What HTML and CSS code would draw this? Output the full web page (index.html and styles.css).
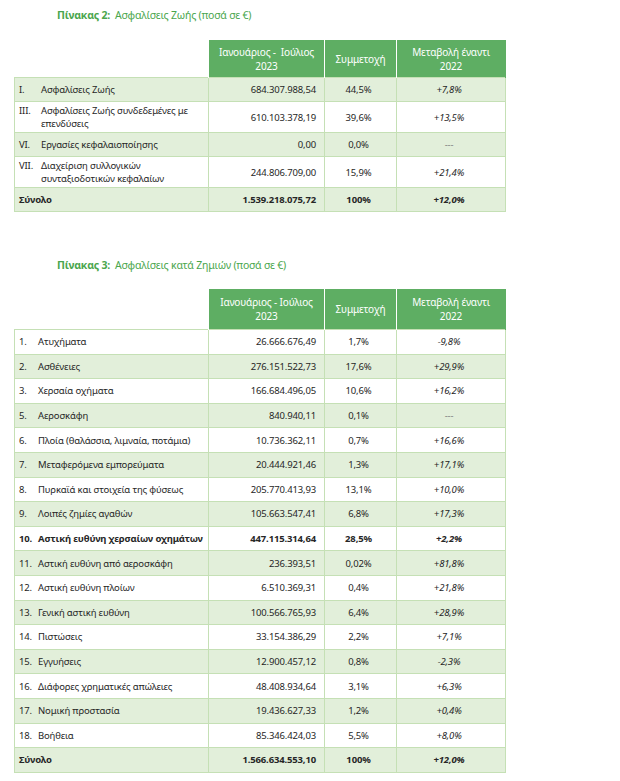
FILE: index.html
```html
<!DOCTYPE html>
<html lang="el">
<head>
<meta charset="utf-8">
<title>Πίνακες</title>
<link rel="stylesheet" href="styles.css">
</head>
<body>
<div class="page">
  <h2 class="caption caption-first"><b>Πίνακας 2:</b>&nbsp; Ασφαλίσεις Ζωής (ποσά σε €)</h2>
  <table class="data life">
    <colgroup><col class="c1"><col class="c2"><col class="c3"><col class="c4"></colgroup>
    <thead>
      <tr><th class="blank"></th><th>Ιανουάριος -&nbsp; Ιούλιος<br>2023</th><th>Συμμετοχή</th><th>Μεταβολή έναντι<br>2022</th></tr>
    </thead>
    <tbody>
      <tr class="g"><td><div class="item"><span class="num">I.</span><span>Ασφαλίσεις Ζωής</span></div></td><td class="amt">684.307.988,54</td><td class="pct">44,5%</td><td class="chg">+7,8%</td></tr>
      <tr><td><div class="item"><span class="num">III.</span><span>Ασφαλίσεις Ζωής συνδεδεμένες με επενδύσεις</span></div></td><td class="amt">610.103.378,19</td><td class="pct">39,6%</td><td class="chg">+13,5%</td></tr>
      <tr class="g"><td><div class="item"><span class="num">VI.</span><span>Εργασίες κεφαλαιοποίησης</span></div></td><td class="amt">0,00</td><td class="pct">0,0%</td><td class="chg dash">---</td></tr>
      <tr><td><div class="item"><span class="num">VII.</span><span>Διαχείριση συλλογικών συνταξιοδοτικών κεφαλαίων</span></div></td><td class="amt">244.806.709,00</td><td class="pct">15,9%</td><td class="chg">+21,4%</td></tr>
      <tr class="g total"><td>Σύνολο</td><td class="amt">1.539.218.075,72</td><td class="pct">100%</td><td class="chg">+12,0%</td></tr>
    </tbody>
  </table>

  <h2 class="caption caption-second"><b>Πίνακας 3:</b>&nbsp; Ασφαλίσεις κατά Ζημιών (ποσά σε €)</h2>
  <table class="data nonlife">
    <colgroup><col class="c1"><col class="c2"><col class="c3"><col class="c4"></colgroup>
    <thead>
      <tr><th class="blank"></th><th>Ιανουάριος - Ιούλιος<br>2023</th><th>Συμμετοχή</th><th>Μεταβολή έναντι<br>2022</th></tr>
    </thead>
    <tbody>
      <tr><td><div class="item"><span class="num">1.</span><span>Ατυχήματα</span></div></td><td class="amt">26.666.676,49</td><td class="pct">1,7%</td><td class="chg">-9,8%</td></tr>
      <tr class="g"><td><div class="item"><span class="num">2.</span><span>Ασθένειες</span></div></td><td class="amt">276.151.522,73</td><td class="pct">17,6%</td><td class="chg">+29,9%</td></tr>
      <tr><td><div class="item"><span class="num">3.</span><span>Χερσαία οχήματα</span></div></td><td class="amt">166.684.496,05</td><td class="pct">10,6%</td><td class="chg">+16,2%</td></tr>
      <tr class="g"><td><div class="item"><span class="num">5.</span><span>Αεροσκάφη</span></div></td><td class="amt">840.940,11</td><td class="pct">0,1%</td><td class="chg dash">---</td></tr>
      <tr><td><div class="item"><span class="num">6.</span><span>Πλοία (θαλάσσια, λιμναία, ποτάμια)</span></div></td><td class="amt">10.736.362,11</td><td class="pct">0,7%</td><td class="chg">+16,6%</td></tr>
      <tr class="g"><td><div class="item"><span class="num">7.</span><span>Μεταφερόμενα εμπορεύματα</span></div></td><td class="amt">20.444.921,46</td><td class="pct">1,3%</td><td class="chg">+17,1%</td></tr>
      <tr><td><div class="item"><span class="num">8.</span><span>Πυρκαϊά και στοιχεία της φύσεως</span></div></td><td class="amt">205.770.413,93</td><td class="pct">13,1%</td><td class="chg">+10,0%</td></tr>
      <tr class="g"><td><div class="item"><span class="num">9.</span><span>Λοιπές ζημίες αγαθών</span></div></td><td class="amt">105.663.547,41</td><td class="pct">6,8%</td><td class="chg">+17,3%</td></tr>
      <tr class="strong"><td><div class="item"><span class="num">10.</span><span>Αστική ευθύνη χερσαίων οχημάτων</span></div></td><td class="amt">447.115.314,64</td><td class="pct">28,5%</td><td class="chg">+2,2%</td></tr>
      <tr class="g"><td><div class="item"><span class="num">11.</span><span>Αστική ευθύνη από αεροσκάφη</span></div></td><td class="amt">236.393,51</td><td class="pct">0,02%</td><td class="chg">+81,8%</td></tr>
      <tr><td><div class="item"><span class="num">12.</span><span>Αστική ευθύνη πλοίων</span></div></td><td class="amt">6.510.369,31</td><td class="pct">0,4%</td><td class="chg">+21,8%</td></tr>
      <tr class="g"><td><div class="item"><span class="num">13.</span><span>Γενική αστική ευθύνη</span></div></td><td class="amt">100.566.765,93</td><td class="pct">6,4%</td><td class="chg">+28,9%</td></tr>
      <tr><td><div class="item"><span class="num">14.</span><span>Πιστώσεις</span></div></td><td class="amt">33.154.386,29</td><td class="pct">2,2%</td><td class="chg">+7,1%</td></tr>
      <tr class="g"><td><div class="item"><span class="num">15.</span><span>Εγγυήσεις</span></div></td><td class="amt">12.900.457,12</td><td class="pct">0,8%</td><td class="chg">-2,3%</td></tr>
      <tr><td><div class="item"><span class="num">16.</span><span>Διάφορες χρηματικές απώλειες</span></div></td><td class="amt">48.408.934,64</td><td class="pct">3,1%</td><td class="chg">+6,3%</td></tr>
      <tr class="g"><td><div class="item"><span class="num">17.</span><span>Νομική προστασία</span></div></td><td class="amt">19.436.627,33</td><td class="pct">1,2%</td><td class="chg">+0,4%</td></tr>
      <tr><td><div class="item"><span class="num">18.</span><span>Βοήθεια</span></div></td><td class="amt">85.346.424,03</td><td class="pct">5,5%</td><td class="chg">+8,0%</td></tr>
      <tr class="g total"><td>Σύνολο</td><td class="amt">1.566.634.553,10</td><td class="pct">100%</td><td class="chg">+12,0%</td></tr>
    </tbody>
  </table>
</div>
</body>
</html>
```

FILE: styles.css
```css
html, body {
  margin: 0;
  padding: 0;
  background: #ffffff;
}

body {
  font-family: "Noto Sans", "Open Sans", "DejaVu Sans", sans-serif;
  font-size: 9.5px;
  letter-spacing: -0.15px;
  color: #262626;
}

.page {
  padding: 0 0 0 14px;
}

.caption {
  margin: 0;
  padding-left: 43px;
  font-size: 10.5px;
  font-weight: normal;
  color: #4aa64d;
  line-height: 14px;
  letter-spacing: -0.2px;
}

.caption b {
  font-weight: bold;
}

.caption-first {
  padding-top: 8px;
  margin-bottom: 18px;
}

.caption-second {
  margin-top: 46px;
  margin-bottom: 17px;
}

.data {
  border-collapse: collapse;
  table-layout: fixed;
  width: 491px;
}

.c1 { width: 194px; }
.c2 { width: 116px; }
.c3 { width: 72px; }
.c4 { width: 109px; }

.data th {
  background: #5eae63;
  color: #ffffff;
  font-weight: normal;
  font-size: 10px;
  text-align: center;
  line-height: 14px;
  padding: 2px 4px;
  height: 33px;
  border-left: 1px solid #ffffff;
  border-right: 1px solid #ffffff;
}

.data th:last-child {
  border-right: 1px solid #5eae63;
}

.data th.blank {
  background: #ffffff;
  border: none;
}

.nonlife th {
  height: 36px;
}

.data td {
  border: 1px solid #c5e0b5;
  padding: 2px 8px 2px 4px;
  line-height: 13px;
  height: 19px;
  white-space: nowrap;
}

.nonlife td {
  height: 19.6px;
}

.data td:first-child {
  white-space: normal;
  padding-right: 2px;
}

.data tr.g td {
  background: #e2efda;
}

.item {
  display: flex;
}

.item .num {
  flex: 0 0 22px;
}

.nonlife .item .num {
  flex-basis: 19px;
}

.nonlife .item span:last-child {
  white-space: nowrap;
}

.amt {
  text-align: right;
}

.pct {
  text-align: center;
}

.chg {
  text-align: center;
  font-style: italic;
}

.chg.dash {
  font-style: normal;
  color: #7f7f7f;
}

.total td,
.strong td {
  font-weight: bold;
}
```
